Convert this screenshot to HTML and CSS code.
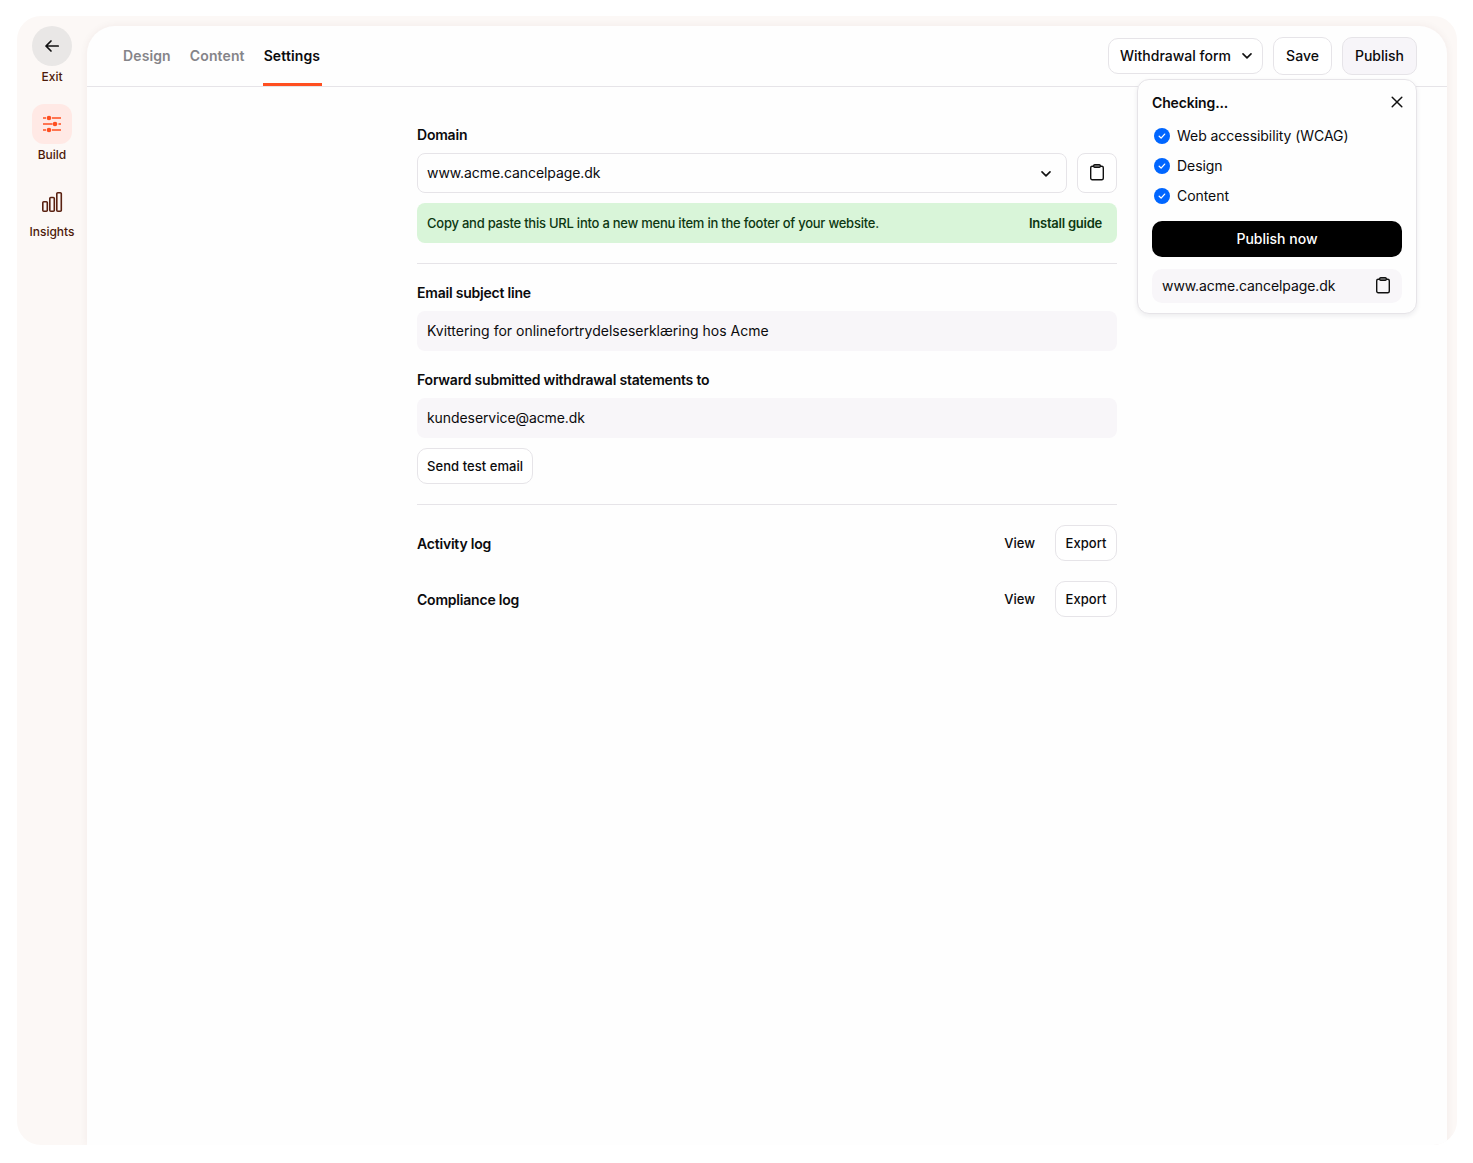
FILE: index.html
```html
<!DOCTYPE html>
<html lang="en">

<head>
	<meta charset="UTF-8">
	<meta name="viewport" content="width=device-width, initial-scale=1.0">
	<title>Settings</title>
	<link rel="stylesheet" href="styles.css">
</head>

<body>
	<div class="app">
		<nav class="sidebar">
			<a class="side-item">
				<span class="side-icon exit">
					<svg width="16" height="16" viewBox="0 0 16 16" fill="none" stroke="#111" stroke-width="1.7" stroke-linecap="round" stroke-linejoin="round"><path d="M14.2 8H2M7 3L2 8l5 5" /></svg>
				</span>
				<span class="side-label">Exit</span>
			</a>
			<a class="side-item">
				<span class="side-icon build">
					<svg width="20" height="18" viewBox="0 0 20 18" fill="none" stroke="#ff4f20" stroke-width="1.5"><path d="M1 3h3M10 3h9M1 9h9.5M16.500 9H19M1 15h3M10 15h9" /><g fill="#ff4f20" stroke="none"><circle cx="7" cy="3" r="2.3" /><circle cx="13" cy="9" r="2.3" /><circle cx="7" cy="15" r="2.3" /></g></svg>
				</span>
				<span class="side-label">Build</span>
			</a>
			<a class="side-item insights">
				<span class="side-icon">
					<svg width="22" height="22" viewBox="0 0 22 22" fill="none" stroke="#5a2212" stroke-width="1.6"><rect x="1.8" y="10.8" width="4.5" height="9.4" rx="1" /><rect x="8.8" y="6.5" width="4.5" height="13.7" rx="1" /><rect x="15.8" y="1.8" width="4.5" height="18.4" rx="1" /></svg>
				</span>
				<span class="side-label">Insights</span>
			</a>
		</nav>

		<main class="main">
			<header class="topbar">
				<div class="tabs">
					<a class="tab">Design</a>
					<a class="tab">Content</a>
					<a class="tab active">Settings</a>
				</div>
				<div class="actions">
					<button class="btn form-select" type="button">
						<span>Withdrawal form</span>
						<svg width="10" height="6" viewBox="0 0 10 6" fill="none" stroke="#111" stroke-width="1.6" stroke-linecap="round" stroke-linejoin="round"><path d="M1 .9l4 4 4-4" /></svg>
					</button>
					<button class="btn save" type="button"><span>Save</span></button>
					<button class="btn publish" type="button"><span>Publish</span></button>
				</div>

				<div class="popup">
					<div class="popup-head">
						<h3>Checking...</h3>
						<svg width="12" height="12" viewBox="0 0 12 12" fill="none" stroke="#111" stroke-width="1.5" stroke-linecap="round"><path d="M1.2 1.2l9.6 9.6M10.8 1.2l-9.6 9.6" /></svg>
					</div>
					<ul class="checks">
						<li>
							<svg width="16" height="16" viewBox="0 0 16 16"><circle cx="8" cy="8" r="8" fill="#0066ff" /><path d="M5.2 8.3l1.9 1.8 3.6-4" fill="none" stroke="#fff" stroke-width="1.3" stroke-linecap="round" stroke-linejoin="round" /></svg>
							<span>Web accessibility (WCAG)</span>
						</li>
						<li>
							<svg width="16" height="16" viewBox="0 0 16 16"><circle cx="8" cy="8" r="8" fill="#0066ff" /><path d="M5.2 8.3l1.9 1.8 3.6-4" fill="none" stroke="#fff" stroke-width="1.3" stroke-linecap="round" stroke-linejoin="round" /></svg>
							<span>Design</span>
						</li>
						<li>
							<svg width="16" height="16" viewBox="0 0 16 16"><circle cx="8" cy="8" r="8" fill="#0066ff" /><path d="M5.2 8.3l1.9 1.8 3.6-4" fill="none" stroke="#fff" stroke-width="1.3" stroke-linecap="round" stroke-linejoin="round" /></svg>
							<span>Content</span>
						</li>
					</ul>
					<button class="publish-now" type="button"><span>Publish now</span></button>
					<div class="popup-url">
						<span class="url">www.acme.cancelpage.dk</span>
						<svg width="14" height="18" viewBox="0 0 14 18" fill="none" stroke="#111" stroke-width="1.4"><rect x=".7" y="2.2" width="12.6" height="13.600" rx="1.5" /><rect x="3.7" y=".7" width="6.6" height="2.6" rx="1" fill="#aaa" /></svg>
					</div>
				</div>
			</header>

			<div class="content">
				<h3>Domain</h3>
				<div class="domain">
					<div class="select">
						<span class="url">www.acme.cancelpage.dk</span>
						<svg width="10" height="6" viewBox="0 0 10 6" fill="none" stroke="#111" stroke-width="1.6" stroke-linecap="round" stroke-linejoin="round"><path d="M1 .9l4 4 4-4" /></svg>
					</div>
					<button class="copy" type="button">
						<svg width="14" height="18" viewBox="0 0 14 18" fill="none" stroke="#111" stroke-width="1.4"><rect x=".7" y="2.2" width="12.6" height="13.6" rx="1.5" /><rect x="3.7" y=".7" width="6.6" height="2.6" rx="1" fill="#aaa" /></svg>
					</button>
				</div>
				<div class="notice">
					<span>Copy and paste this URL into a new menu item in the footer of your website.</span>
					<b>Install guide</b>
				</div>
				<hr>
				<h3>Email subject line</h3>
				<div class="field"><span>Kvittering for onlinefortrydelseserklæring hos Acme</span></div>
				<h3>Forward submitted withdrawal statements to</h3>
				<div class="field"><span class="url">kundeservice@acme.dk</span></div>
				<button class="btn small test" type="button">Send test email</button>
				<hr>
				<div class="log">
					<h3>Activity log</h3>
					<a class="view">View</a>
					<button class="btn small" type="button">Export</button>
				</div>
				<div class="log">
					<h3>Compliance log</h3>
					<a class="view">View</a>
					<button class="btn small" type="button">Export</button>
				</div>
			</div>
		</main>
	</div>
</body>

</html>
```
FILE: styles.css
```css
* {
	box-sizing: border-box;
}

body {
	margin: 0;
	padding: 16px 16px 18px 17px;
	height: 1163px;
	background-color: #fff;
	color: #0b0b0d;
	font-family: Inter, "Liberation Sans", sans-serif;
	font-size: 14px;
}

h3 {
	margin: 0;
	font-size: 14px;
	font-weight: 600;
	line-height: 20px;
	letter-spacing: -0.21px;
}

button {
	font-family: inherit;
	color: inherit;
}

svg {
	display: block;
	flex-shrink: 0;
}

.app {
	display: flex;
	height: 1129px;
	padding: 10px 10px 0 0;
	border-radius: 24px;
	background-color: #fcf8f6;
	overflow: hidden;
}

.sidebar {
	width: 70px;
	display: flex;
	flex-direction: column;
	align-items: center;
	gap: 18px;
}

.side-item {
	display: flex;
	flex-direction: column;
	align-items: center;
	gap: 2px;
	color: #4d1a0a;
}

.side-icon {
	display: flex;
	align-items: center;
	justify-content: center;
	width: 40px;
	height: 40px;
	border-radius: 12px;
}

.exit {
	border-radius: 50%;
	background-color: #e9e7e6;
}

.build {
	background-color: #ffe9e5;
}

.insights {
	gap: 1px;
}

.side-label {
	font-size: 12px;
	font-weight: 500;
	line-height: 18px;
}

.main {
	flex: 1;
	border-radius: 28px 28px 0 0;
	background-color: #fefefe;
	box-shadow: 0 0 8px rgba(90, 40, 30, 0.06);
}

.topbar {
	position: relative;
	display: flex;
	justify-content: space-between;
	height: 61px;
	padding: 0 30px 0 35px;
	border-bottom: 1px solid #e6e4e8;
}

.tabs {
	display: flex;
	gap: 16px;
}

.tab {
	height: 60px;
	padding: 0 2px 0 1px;
	border-bottom: 3px solid transparent;
	line-height: 60px;
	font-weight: 600;
	letter-spacing: 0.12px;
	color: #858489;
}

.tab.active {
	color: #0b0b0d;
	border-bottom-color: #ff4f20;
}

.actions {
	display: flex;
	align-items: center;
	gap: 10px;
}

.btn {
	display: flex;
	align-items: center;
	justify-content: center;
	height: 36px;
	padding: 0;
	border: 1px solid #e6e4e8;
	border-radius: 10px;
	background-color: #fff;
	font-size: 14px;
	font-weight: 500;
}

.btn span,
.publish-now span,
.checks span,
.url,
.field span {
	padding-bottom: 2px;
}

.publish-now span {
	display: block;
}

.form-select {
	width: 155px;
	padding-left: 1px;
	gap: 11px;
}

.save {
	width: 59px;
	height: 38px;
}

.publish {
	width: 75px;
	height: 38px;
	background-color: #f7f5f9;
}

.popup {
	position: absolute;
	top: 53px;
	right: 30px;
	width: 280px;
	height: 235px;
	padding: 13px 14px;
	border: 1px solid #e6e4e8;
	border-radius: 12px;
	background-color: #fefefe;
	box-shadow: 0 2px 5px rgba(30, 20, 50, 0.08);
}

.popup-head {
	display: flex;
	justify-content: space-between;
}

.popup-head h3 {
	letter-spacing: -0.14px;
}

.popup-head svg {
	margin: 3px -1px 0 0;
}

.checks {
	list-style: none;
	margin: 8px 0 10px;
	padding: 0 0 0 2px;
	letter-spacing: -0.06px;
}

.checks li {
	display: flex;
	align-items: center;
	gap: 7px;
	height: 30px;
}

.publish-now {
	display: block;
	width: 250px;
	height: 36px;
	border: 0;
	border-radius: 10px;
	background-color: #000;
	color: #fff;
	font-size: 14px;
	font-weight: 500;
}

.url {
	letter-spacing: -0.08px;
}

.popup-url {
	display: flex;
	align-items: center;
	justify-content: space-between;
	height: 34px;
	margin-top: 12px;
	padding: 0 12px 0 10px;
	border-radius: 10px;
	background-color: #f8f6f9;
}

.content {
	width: 700px;
	margin: 0 auto;
	padding-top: 38px;
}

.domain {
	display: flex;
	gap: 10px;
	margin-top: 8px;
}

.select {
	flex: 1;
	display: flex;
	align-items: center;
	justify-content: space-between;
	height: 40px;
	padding: 0 15px 0 9px;
	border: 1px solid #e6e4e8;
	border-radius: 8px;
}

.select svg {
	margin-top: 2px;
}

.copy {
	display: flex;
	align-items: center;
	justify-content: center;
	width: 40px;
	height: 40px;
	padding: 0;
	border: 1px solid #e6e4e8;
	border-radius: 8px;
	background-color: #fff;
}

.notice {
	display: flex;
	align-items: center;
	justify-content: space-between;
	height: 40px;
	margin-top: 10px;
	padding: 0 15px 0 10px;
	border-radius: 8px;
	background-color: #d9f5d9;
	color: #0d3812;
	font-size: 13px;
	font-weight: 500;
	letter-spacing: -0.24px;
}

.notice b {
	font-weight: 600;
}

hr {
	height: 1px;
	margin: 20px 0 19px;
	border: 0;
	background-color: #e6e4e8;
}

.field {
	display: flex;
	align-items: center;
	height: 40px;
	margin: 8px 0 19px;
	padding: 0 10px;
	border-radius: 8px;
	background-color: #f8f6f9;
}

.small {
	padding: 0 9px;
	font-size: 13px;
	letter-spacing: 0.06px;
}

.test {
	margin-top: -9px;
}

.log {
	display: flex;
	align-items: center;
	height: 36px;
	margin-top: 20px;
}

.log h3 {
	flex: 1;
	padding-top: 2px;
}

.log .btn {
	width: 62px;
}

.view {
	margin-right: 20px;
	font-size: 13px;
	font-weight: 500;
}
```
